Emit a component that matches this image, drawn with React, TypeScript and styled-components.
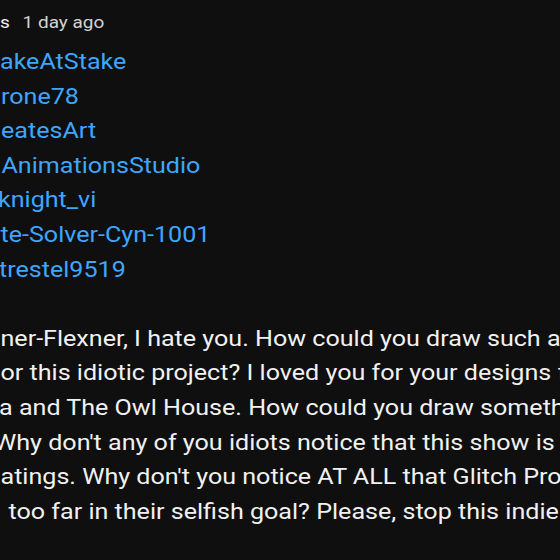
import styled, { createGlobalStyle } from 'styled-components';

// the reference is a stretched crop: glyphs are a bit wider than tall
const SCALE = 1.115;

const GlobalStyle = createGlobalStyle`
  html, body {
    margin: 0;
    padding: 0;
    background: #0f0f0f;
  }
`;

const links = [
  { text: 'akeAtStake', x: 0 },
  { text: 'rone78', x: 1 },
  { text: 'eatesArt', x: 1 },
  { text: 'AnimationsStudio', x: 1.5 },
  { text: 'knight_vi', x: -2 },
  { text: 'te-Solver-Cyn-1001', x: 0.5 },
  { text: 'trestel9519', x: -1 },
];

const body = [
  { text: 'ner-Flexner, I hate you. How could you draw such a', x: 0.5 },
  { text: 'or this idiotic project? I loved you for your designs for', x: 0.5 },
  { text: 'a and The Owl House. How could you draw something', x: -1 },
  { text: "Why don't any of you idiots notice that this show is bad", x: -6 },
  { text: "atings. Why don't you notice AT ALL that Glitch Productions", x: 0.5 },
  { text: 'too far in their selfish goal? Please, stop this indie show', x: 8.5 },
];

const App = () => {
  return (
    <Page>
      <GlobalStyle />
      <Content>
        <Header>
          <Author>s</Author>
          <Time>1 day ago</Time>
        </Header>
        <Block>
          {links.map((item) => (
            <Line key={item.text} $x={item.x} $link>
              {item.text}
            </Line>
          ))}
        </Block>
        <Block $spaced>
          {body.map((item) => (
            <Line key={item.text} $x={item.x}>
              {item.text}
            </Line>
          ))}
        </Block>
      </Content>
    </Page>
  );
};

const Page = styled.div`
  width: 560px;
  height: 560px;
  overflow: hidden;
  background: #0f0f0f;
  font-family: Roboto, 'Noto Sans', sans-serif;
`;

const Content = styled.div`
  display: flex;
  flex-direction: column;
  padding-top: 10px;
  transform: scaleX(${SCALE});
  transform-origin: 0 0;
`;

const Header = styled.div`
  display: flex;
  align-items: baseline;
  gap: 11.5px;
  height: 24px;
  line-height: 24px;
  font-size: 17px;
  white-space: nowrap;
`;

const Author = styled.span`
  color: #f1f1f1;
`;

const Time = styled.span`
  color: #d4d4d4;
`;

const Block = styled.div<{ $spaced?: boolean }>`
  display: flex;
  flex-direction: column;
  margin-top: ${(p) => (p.$spaced ? '34.6px' : '10px')};
`;

const Line = styled.div<{ $x: number; $link?: boolean }>`
  margin-left: ${(p) => p.$x / SCALE}px;
  font-size: 22.5px;
  line-height: 34.6px;
  height: 34.6px;
  white-space: nowrap;
  color: ${(p) => (p.$link ? '#3ea6ff' : '#f1f1f1')};
`;

export default App;
